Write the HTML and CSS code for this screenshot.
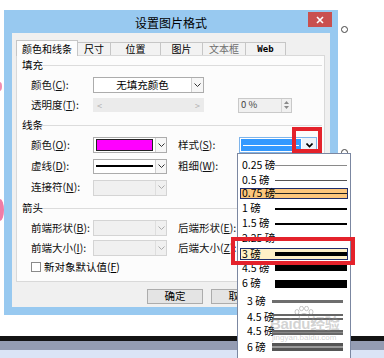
FILE: index.html
```html
<!DOCTYPE html>
<html lang="zh-CN">
<head>
  <meta charset="UTF-8" />
  <meta name="viewport" content="width=device-width, initial-scale=1.0" />
  <title>设置图片格式</title>
  <link rel="stylesheet" href="styles.css">
</head>
<body>
  <div class="page">
    <div class="dialog">
      <div class="titlebar">
        <span class="title">设置图片格式</span>
        <span class="close">
          <svg width="8" height="8" viewBox="0 0 8 8"><path d="M1 1L7 7M7 1L1 7" stroke="#fff" stroke-width="1.6"/></svg>
        </span>
      </div>

      <div class="dlg-body">
        <div class="tabs">
          <div class="tab active w1">颜色和线条</div>
          <div class="tab w2">尺寸</div>
          <div class="tab w3">位置</div>
          <div class="tab w4">图片</div>
          <div class="tab w5 off">文本框</div>
          <div class="tab w6 web">Web</div>
        </div>

        <div class="panel">
          <div class="sec first">填充</div>
          <div class="row">
            <span class="lbl">颜色(<u>C</u>):</span>
            <div class="combo fill-combo">
              <span class="val">无填充颜色</span>
              <span class="drop"><svg width="7" height="5"><polyline points="0.5,0.5 3.5,3.5 6.5,0.5" fill="none" stroke="#333"/></svg></span>
            </div>
          </div>
          <div class="row">
            <span class="lbl">透明度(<u>T</u>):</span>
            <div class="slider"><span>&lt;</span><span>&gt;</span></div>
            <div class="spin">
              <span class="spin-val">0 %</span>
              <span class="spin-btns">
                <svg width="5" height="3"><polygon points="0,3 2.5,0 5,3" fill="#888"/></svg>
                <svg width="5" height="3"><polygon points="0,0 2.5,3 5,0" fill="#888"/></svg>
              </span>
            </div>
          </div>

          <div class="sec">线条</div>
          <div class="row">
            <span class="lbl">颜色(<u>O</u>):</span>
            <div class="combo short">
              <span class="val"><i class="swatch"></i></span>
              <span class="drop"><svg width="7" height="5"><polyline points="0.5,0.5 3.5,3.5 6.5,0.5" fill="none" stroke="#333"/></svg></span>
            </div>
            <span class="lbl lbl2">样式(<u>S</u>):</span>
            <div class="combo style-combo">
              <span class="style-val"><i></i></span>
              <span class="drop"><svg width="7" height="5"><polyline points="0.5,0.5 3.5,3.5 6.5,0.5" fill="none" stroke="#000" stroke-width="1.6"/></svg></span>
            </div>
          </div>
          <div class="row tall">
            <span class="lbl">虚线(<u>D</u>):</span>
            <div class="combo short dash">
              <span class="val"><i class="dash-line"></i></span>
              <span class="drop"><svg width="7" height="5"><polyline points="0.5,0.5 3.5,3.5 6.5,0.5" fill="none" stroke="#333"/></svg></span>
            </div>
            <span class="lbl lbl2">粗细(<u>W</u>):</span>
            <div class="combo style-combo"><span class="val"></span></div>
          </div>
          <div class="row mid">
            <span class="lbl">连接符(<u>N</u>):</span>
            <div class="combo short disabled">
              <span class="val"></span>
              <span class="drop"><svg width="7" height="5"><polyline points="0.5,0.5 3.5,3.5 6.5,0.5" fill="none" stroke="#aaa"/></svg></span>
            </div>
          </div>

          <div class="sec">箭头</div>
          <div class="row">
            <span class="lbl">前端形状(<u>B</u>):</span>
            <div class="combo short disabled">
              <span class="val"></span>
              <span class="drop"><svg width="7" height="5"><polyline points="0.5,0.5 3.5,3.5 6.5,0.5" fill="none" stroke="#aaa"/></svg></span>
            </div>
            <span class="lbl lbl2">后端形状(<u>E</u>):</span>
            <div class="combo style-combo disabled"><span class="val"></span></div>
          </div>
          <div class="row">
            <span class="lbl">前端大小(<u>I</u>):</span>
            <div class="combo short disabled">
              <span class="val"></span>
              <span class="drop"><svg width="7" height="5"><polyline points="0.5,0.5 3.5,3.5 6.5,0.5" fill="none" stroke="#aaa"/></svg></span>
            </div>
            <span class="lbl lbl2">后端大小(<u>Z</u>):</span>
            <div class="combo style-combo disabled"><span class="val"></span></div>
          </div>
          <div class="row check-row">
            <span class="checkbox"></span>
            <span>新对象默认值(<u>F</u>)</span>
          </div>
        </div>

        <div class="actions">
          <span class="btn">确定</span>
          <span class="btn">取消</span>
        </div>
      </div>
    </div>

    <div class="taskbar">
      <div class="tb-edge"></div>
      <div class="tb-mid"></div>
      <div class="tb-low"></div>
    </div>
  </div>

  <!-- things lying over the screenshot -->
  <span class="blob blob1"></span>
  <span class="blob blob2"></span>
  <span class="handle h1"></span>
  <span class="handle h2"></span>

  <div class="dropdown">
    <div class="opt o1"><span class="t">0.25 磅</span><i class="ln l1"></i></div>
    <div class="opt o2"><span class="t">0.5 磅</span><i class="ln l2"></i></div>
    <div class="opt hl orange"><span class="t">0.75 磅</span><i class="ln l3"></i></div>
    <div class="opt o4"><span class="t">1 磅</span><i class="ln l4"></i></div>
    <div class="opt o5"><span class="t">1.5 磅</span><i class="ln l4"></i></div>
    <div class="opt o6"><span class="t">2.25 磅</span><i class="ln l6"></i></div>
    <div class="opt hl yellow"><span class="t">3 磅</span><i class="ln l7"></i></div>
    <div class="opt o8"><span class="t">4.5 磅</span><i class="ln l8"></i></div>
    <div class="opt o9"><span class="t">6 磅</span><i class="ln l9"></i></div>
    <div class="opt low o10"><span class="t">3 磅</span><i class="ln l10"></i></div>
    <div class="opt low o11"><span class="t">4.5 磅</span><i class="ln l11"></i></div>
    <div class="opt low o12"><span class="t">4.5 磅</span><i class="ln l12"></i></div>
    <div class="opt low o13"><span class="t">6 磅</span><i class="ln l13"></i></div>
  </div>

  <div class="watermark">
    <svg class="paw" width="22" height="14" viewBox="0 0 22 14">
      <g fill="none" stroke="rgba(130,130,130,0.45)" stroke-width="1">
        <ellipse cx="4" cy="6" rx="2" ry="2.5"/>
        <ellipse cx="8.5" cy="2.5" rx="2" ry="2.2"/>
        <ellipse cx="13.5" cy="2.5" rx="2" ry="2.2"/>
        <ellipse cx="18" cy="6" rx="2" ry="2.5"/>
        <path d="M6 12.5C6 9 9 7.5 11 7.5S16 9 16 12.5C14 13.5 8 13.5 6 12.5Z"/>
      </g>
    </svg>
    <span class="wm-big">Baidu经验</span>
    <span class="wm-small">jingyan.baidu.com</span>
  </div>

  <span class="mark mark-a"></span>
  <span class="mark mark-b"></span>
</body>
</html>
```

FILE: styles.css
```css
body {
  margin: 0;
  width: 384px;
  height: 358px;
  overflow: hidden;
  position: relative;
  background: #fff;
  color: #000;
  font-family: "Noto Sans CJK SC", "Liberation Sans", sans-serif;
  font-size: 10.5px;
  line-height: 1;
}

u {
  text-decoration: underline;
  text-underline-offset: 1px;
}

.page {
  padding-top: 10px;
}

/* window frame */
.dialog {
  margin-left: 4px;
  width: 334px;
  height: 305px;
  box-sizing: border-box;
  background: #98c9f0;
  padding: 0 8px 8px;
  display: flex;
  flex-direction: column;
}

.titlebar {
  height: 23px;
  display: flex;
  align-items: flex-start;
  padding-left: 22px;
}

.title {
  flex: 1;
  text-align: center;
  font-size: 12px;
  margin-top: 7px;
}

.close {
  width: 24px;
  height: 15px;
  margin-top: 2px;
  margin-right: -2px;
  background: #c9504f;
  display: flex;
  align-items: center;
  justify-content: center;
}

.dlg-body {
  flex: 1;
  background: #f0f0f0;
  padding: 7px 0 0 4px;
  display: flex;
  flex-direction: column;
}

/* tabs */
.tabs {
  display: flex;
  align-items: flex-end;
  height: 15px;
}

.tab {
  height: 13px;
  box-sizing: border-box;
  border: 1px solid #c6c6c6;
  border-bottom: none;
  margin-left: -1px;
  background: #f2f2f2;
  display: flex;
  align-items: center;
  justify-content: center;
  font-size: 10px;
}

.tab.active {
  height: 16px;
  margin-left: 0;
  margin-bottom: -1px;
  background: #fcfcfc;
  position: relative;
  z-index: 1;
}

.w1 { width: 62px; }
.w2 { width: 34px; }
.w3 { width: 51px; }
.w4 { width: 43px; }
.w5 { width: 44px; }
.w6 { width: 41px; }

.tab.off {
  color: #6d6d6d;
}

.tab.web {
  font-family: "DejaVu Sans Mono", monospace;
  font-weight: bold;
  font-size: 9px;
}

.panel {
  width: 309px;
  height: 227px;
  box-sizing: border-box;
  border: 1px solid #d9d9d9;
  background: #fcfcfc;
}

.sec {
  height: 20px;
  display: flex;
  align-items: center;
  padding-left: 5px;
}

.sec.first {
  height: 19px;
}

.sec::after {
  content: "";
  flex: 1;
  height: 1px;
  background: #dcdcdc;
  margin: 0 2px 0 0;
}

.row {
  height: 20px;
  display: flex;
  align-items: center;
  padding-left: 14px;
}

.row.tall { height: 22px; }
.row.mid { height: 21px; }
.row.check-row { height: 18px; }

.lbl {
  width: 62px;
  white-space: nowrap;
  color: #111;
}

.lbl2 {
  width: 61px;
  margin-left: 11px;
}

/* combo boxes */
.combo {
  height: 16px;
  box-sizing: border-box;
  border: 1px solid #acacac;
  background: #fff;
  display: flex;
}

.combo .val {
  flex: 1;
  display: flex;
  align-items: center;
  justify-content: center;
}

.combo .drop {
  width: 10px;
  border-left: 1px solid #cfcfcf;
  background: #f6f6f6;
  display: flex;
  align-items: center;
  justify-content: center;
}

.fill-combo {
  width: 111px;
}

.fill-combo .drop {
  width: 11px;
}

.short {
  width: 74px;
}

.swatch {
  flex: 1;
  align-self: stretch;
  margin: 1px 2px;
  border: 1px solid #222;
  background: #ff00ff;
}

.dash {
  height: 15px;
}

.dash-line {
  flex: 1;
  height: 2px;
  margin: 0 2px;
  background: #000;
}

.disabled {
  background: #f0f0f0;
  border-color: #d4d4d4;
}

.disabled .drop {
  background: #f0f0f0;
  border-left-color: #dedede;
}

.style-combo {
  width: 78px;
  border-color: #7eb4ea;
}

.style-combo.disabled {
  border-color: #d4d4d4;
}

.style-val {
  flex: 1;
  margin: 1px;
  background: #3399ff;
  display: flex;
  align-items: center;
  padding: 0 2px;
}

.style-val i {
  flex: 1;
  height: 1px;
  background: #fff;
}

.style-combo .drop {
  width: 14px;
  background: #eef3fa;
  border-left: none;
}

/* transparency */
.slider {
  width: 111px;
  height: 14px;
  box-sizing: border-box;
  background: #ebebeb;
  display: flex;
  align-items: center;
  justify-content: space-between;
  padding: 0 4px;
  color: #b0b0b0;
  font-size: 9px;
}

.spin {
  width: 54px;
  height: 15px;
  margin-left: 34px;
  box-sizing: border-box;
  border: 1px solid #c9c9c9;
  background: #f0f0f0;
  display: flex;
}

.spin-val {
  flex: 1;
  display: flex;
  align-items: center;
  padding-left: 2px;
  font-size: 9.5px;
  color: #444;
}

.spin-btns {
  width: 9px;
  border-left: 1px solid #d4d4d4;
  display: flex;
  flex-direction: column;
  align-items: center;
  justify-content: space-evenly;
}

.checkbox {
  width: 10px;
  height: 10px;
  box-sizing: border-box;
  border: 1px solid #8a8a8a;
  background: #fff;
  margin-right: 3px;
}

/* bottom buttons */
.actions {
  display: flex;
  gap: 8px;
  padding: 7px 0 0 131px;
}

.btn {
  width: 56px;
  height: 15px;
  box-sizing: border-box;
  border: 1px solid #acacac;
  background: #e4e4e4;
  display: flex;
  align-items: center;
  justify-content: center;
}

/* desktop strip under the window */
.taskbar {
  margin-top: 21px;
}

.tb-edge {
  height: 5px;
  background: #141414;
}

.tb-mid {
  height: 9px;
  background: #949cb2;
}

.tb-low {
  height: 8px;
  background: #dbe4f6;
}

/* overlays */
.blob {
  position: absolute;
  background: #f28bb0;
  border-radius: 50%;
}

.blob1 {
  left: -3px;
  top: 82px;
  width: 5px;
  height: 9px;
}

.blob2 {
  left: -4px;
  top: 199px;
  width: 8px;
  height: 22px;
  background: #f07ca6;
}

.handle {
  position: absolute;
  width: 7px;
  height: 7px;
  box-sizing: border-box;
  border: 1px solid #444;
  border-radius: 50%;
  background: #fff;
}

.h1 { left: 341px; top: 26px; }
.h2 { left: 341px; top: 149px; }

.dropdown {
  position: absolute;
  left: 237px;
  top: 153px;
  width: 114px;
  height: 215px;
  box-sizing: border-box;
  border: 1px solid #7b87a1;
  background: #fff;
  padding-top: 3px;
  z-index: 2;
}

.opt {
  display: flex;
  align-items: center;
  padding: 0 3px 0 4px;
  font-size: 10.5px;
  white-space: nowrap;
}

.opt .t {
  width: 33px;
  flex: none;
}

.opt .ln {
  flex: 1;
}

.o1 { height: 16px; }
.o2 { height: 14px; }
.o4 { height: 17px; }
.o5 { height: 13px; }
.o6 { height: 16px; }
.o8 { height: 14px; }
.o9 { height: 17px; }
.o10 { height: 18px; }
.o11 { height: 14px; }
.o12 { height: 14px; }
.o13 { height: 18px; }

.opt.hl {
  box-sizing: border-box;
  border: 1px solid #1e2d6b;
  margin: 0 2px;
  padding: 0 0 0 1px;
}

.orange {
  height: 11px;
  margin-top: 1px !important;
  margin-bottom: 1px !important;
  background: #fcc67c;
}

.yellow {
  height: 12px;
  margin-top: 2px !important;
  margin-bottom: 1px !important;
  background: #fff0c6;
}

.opt.low {
  padding: 0 7px 0 9px;
}

.opt.low .t {
  width: 25px;
}

.l1 { height: 1px; background: #8a8a8a; }
.l2 { height: 1px; background: #555; }
.l3 { height: 1px; background: #222; }
.l4 { height: 2px; background: #000; }
.l6 { height: 3px; background: #000; }
.l7 { height: 4px; background: #000; }
.l8 { height: 6px; background: #000; }
.l9 { height: 8px; background: #000; }
.l10 { height: 3px; background: #6e6e6e; }

.l11 {
  height: 2px;
  border-top: 2px solid #666;
  border-bottom: 2px solid #666;
}

.l12 {
  height: 1px;
  border-top: 2px solid #666;
  border-bottom: 2px solid #666;
  background: #888;
  margin-top: 2px;
}

.l13 {
  height: 2px;
  border-top: 3px solid #555;
  border-bottom: 3px solid #555;
  background: #999;
}

.watermark {
  position: absolute;
  left: 270px;
  top: 306px;
  width: 90px;
  display: flex;
  flex-direction: column;
  z-index: 3;
  color: rgba(140, 140, 140, 0.4);
  pointer-events: none;
}

.paw {
  margin-left: 23px;
  margin-bottom: -4px;
}

.wm-big {
  font-family: "Liberation Sans", "Noto Sans CJK SC", sans-serif;
  font-size: 15px;
  font-weight: bold;
  letter-spacing: -0.3px;
  white-space: nowrap;
}

.wm-small {
  font-family: "Liberation Sans", sans-serif;
  font-size: 8px;
  margin-top: 3px;
  padding-left: 2px;
  white-space: nowrap;
}

.mark {
  position: absolute;
  box-sizing: border-box;
  border: 4px solid #e4222b;
  z-index: 4;
}

.mark-a {
  left: 292px;
  top: 127px;
  width: 30px;
  height: 26px;
}

.mark-b {
  left: 231px;
  top: 237px;
  width: 124px;
  height: 28px;
}
```
